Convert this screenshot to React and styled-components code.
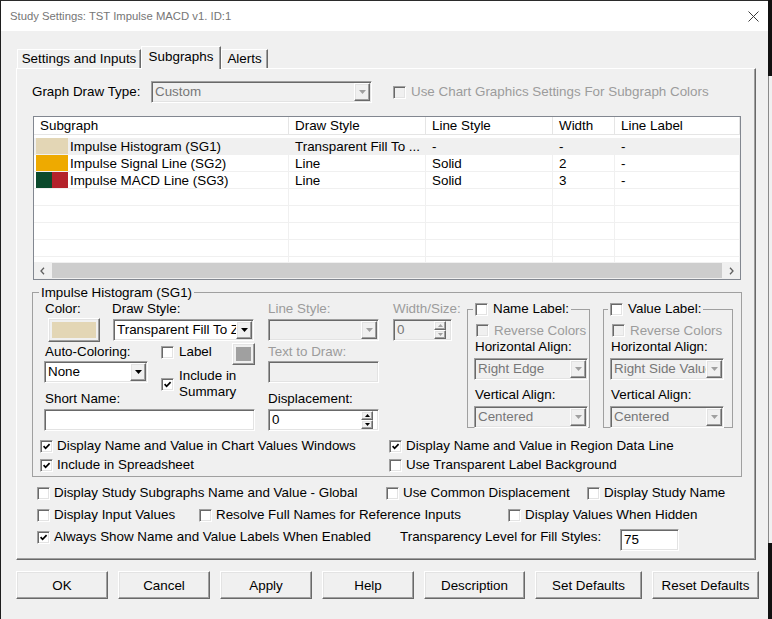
import React from 'react';
import styled, { createGlobalStyle, css } from 'styled-components';

const GlobalStyle = createGlobalStyle`
  * { box-sizing: border-box; }
  html, body { margin: 0; padding: 0; }
  body {
    width: 772px;
    height: 619px;
    overflow: hidden;
    background: #f0f0f0;
    color: #000;
    font-family: 'Liberation Sans', Arial, sans-serif;
    font-size: 13.4px;
  }
`;

const DISABLED_TEXT = '#9c9c9c';
const GRAY_VALUE = '#777';

const raised = css`
  border: 1px solid;
  border-color: #fff #696969 #696969 #fff;
  box-shadow: inset -1px -1px #a0a0a0, inset 1px 1px #e3e3e3;
  background: #f0f0f0;
`;

const sunken = css`
  border: 1px solid;
  border-color: #a0a0a0 #fff #fff #a0a0a0;
  box-shadow: inset 1px 1px #696969, inset -1px -1px #e3e3e3;
`;

const Screen = styled.div`
  display: flex;
  width: 772px;
  height: 619px;
`;

const Dialog = styled.div`
  width: 768px;
  height: 619px;
  flex: none;
  display: flex;
  flex-direction: column;
  border-top: 1px solid #2b2b2b;
  border-left: 1px solid #1e1e1e;
`;

const TitleBar = styled.div`
  height: 30px;
  flex: none;
  background: #fff;
  display: flex;
  align-items: center;
  justify-content: space-between;
  padding: 0 9px 0 9px;
`;

const Title = styled.span`
  font-size: 11.3px;
  color: #767676;
`;

const Body = styled.div`
  flex: 1;
  padding: 15px 0 0 15px;
`;

const TabStrip = styled.div`
  display: flex;
  align-items: flex-end;
  height: 22px;
  padding-left: 1px;
`;

const Tab = styled.div`
  position: relative;
  z-index: ${p => (p.$active ? 2 : 1)};
  width: ${p => p.$w}px;
  height: ${p => (p.$active ? 23 : 19)}px;
  margin-bottom: ${p => (p.$active ? -1 : 0)}px;
  padding-bottom: ${p => (p.$active ? 3 : 2)}px;
  display: flex;
  align-items: center;
  justify-content: center;
  background: #f0f0f0;
  border-top: 1px solid #fff;
  border-left: 1px solid #fff;
  border-right: 1px solid #696969;
  box-shadow: inset -1px 0 #a0a0a0;
`;

const Panel = styled.div`
  width: 740px;
  height: 492px;
  padding: 12px 0 0 15px;
  border: 1px solid;
  border-color: #fff #696969 #696969 #fff;
  box-shadow: inset -1px -1px #a0a0a0;
`;

const Row = styled.div`
  display: flex;
  align-items: center;
  height: ${p => p.$h || 22}px;
  margin: ${p => p.$m || 0};
`;

const Label = styled.span`
  flex: none;
  width: ${p => (p.$w ? `${p.$w}px` : 'auto')};
  margin: ${p => p.$m || 0};
  line-height: 16px;
  white-space: nowrap;
  color: ${p => (p.$disabled ? DISABLED_TEXT : '#000')};
`;

/* ---------- form controls ---------- */

const Field = styled.div`
  flex: none;
  width: ${p => p.$w}px;
  height: 22px;
  margin: ${p => p.$m || 0};
  padding: 1px;
  display: flex;
  align-items: stretch;
  ${sunken}
  background: ${p => (p.$disabled ? '#f0f0f0' : '#fff')};
`;

const FieldText = styled.span`
  flex: 1;
  min-width: 0;
  overflow: hidden;
  white-space: nowrap;
  padding-left: 2px;
  line-height: 18px;
  color: ${p => (p.$disabled ? GRAY_VALUE : '#000')};
`;

const DropBtn = styled.span`
  flex: none;
  width: 16px;
  display: flex;
  align-items: center;
  justify-content: center;
  ${raised}
`;

const SpinCol = styled.span`
  flex: none;
  width: 12px;
  margin-right: 4px;
  display: flex;
  flex-direction: column;
`;

const SpinBtn = styled.span`
  flex: 1;
  display: flex;
  align-items: center;
  justify-content: center;
  ${raised}
`;

const DownArrow = ({ disabled }) => (
  <svg width="7" height="4" viewBox="0 0 7 4">
    <path d="M0 0H7L3.5 4Z" fill={disabled ? '#a0a0a0' : '#000'} />
  </svg>
);

const SpinArrow = ({ up, disabled }) => (
  <svg width="5" height="3" viewBox="0 0 5 3">
    <path d={up ? 'M0 3H5L2.5 0Z' : 'M0 0H5L2.5 3Z'} fill={disabled ? '#a0a0a0' : '#000'} />
  </svg>
);

function Combo({ w, value, disabled, m }) {
  return (
    <Field $w={w} $m={m} $disabled={disabled}>
      <FieldText $disabled={disabled}>{value}</FieldText>
      <DropBtn>
        <DownArrow disabled={disabled} />
      </DropBtn>
    </Field>
  );
}

function Spinner({ w, value, disabled, m }) {
  return (
    <Field $w={w} $m={m} $disabled={disabled}>
      <FieldText $disabled={disabled}>{value}</FieldText>
      <SpinCol>
        <SpinBtn>
          <SpinArrow up disabled={disabled} />
        </SpinBtn>
        <SpinBtn>
          <SpinArrow disabled={disabled} />
        </SpinBtn>
      </SpinCol>
    </Field>
  );
}

function TextBox({ w, value, disabled, m }) {
  return (
    <Field $w={w} $m={m} $disabled={disabled}>
      <FieldText $disabled={disabled}>{value}</FieldText>
    </Field>
  );
}

const CheckWrap = styled.span`
  display: inline-flex;
  align-items: center;
  gap: ${p => p.$gap}px;
  margin: ${p => p.$m || 0};
  flex: none;
  white-space: nowrap;
  line-height: 16px;
  color: ${p => (p.$disabled ? DISABLED_TEXT : '#000')};
`;

const Box = styled.span`
  width: 13px;
  height: 13px;
  flex: none;
  display: flex;
  align-items: center;
  justify-content: center;
  ${sunken}
  background: ${p => (p.$disabled ? '#f0f0f0' : '#fff')};
`;

const Tick = () => (
  <svg width="9" height="9" viewBox="0 0 9 9">
    <path d="M1.6 4.2L3.6 6.3L7.6 2.1" fill="none" stroke="#000" strokeWidth="1.7" />
  </svg>
);

function Check({ checked, disabled, children, m, gap = 5 }) {
  return (
    <CheckWrap $disabled={disabled} $m={m} $gap={gap}>
      <Box $disabled={disabled}>{checked && <Tick />}</Box>
      <span>{children}</span>
    </CheckWrap>
  );
}

const ColorButton = styled.span`
  display: flex;
  width: ${p => p.$w}px;
  height: ${p => p.$h}px;
  margin: ${p => p.$m || 0};
  padding: 3px;
  ${raised}
`;

const ColorFill = styled.span`
  flex: 1;
  background: ${p => p.$color};
`;

/* ---------- list view ---------- */

const COLS = '255px 137px 127px 62px 125px';

const ListView = styled.div`
  margin: 13px 0 0 1px;
  width: 708px;
  height: 164px;
  display: flex;
  flex-direction: column;
  background: #fff;
  border: 1px solid #828790;
`;

const HeaderRow = styled.div`
  display: grid;
  grid-template-columns: ${COLS};
  height: 18px;
  flex: none;
`;

const HeaderCell = styled.div`
  padding-left: 6px;
  line-height: 17px;
  border-right: 1px solid #e5e5e5;
  border-bottom: 1px solid #e5e5e5;
  white-space: nowrap;
`;

const RowsArea = styled.div`
  flex: 1;
  overflow: hidden;
  padding-top: 3px;
`;

const ListRow = styled.div`
  display: grid;
  grid-template-columns: ${COLS};
  height: 17px;
  background: ${p => (p.$selected ? '#f0f0f0' : '#fff')};
`;

const Cell = styled.div`
  display: flex;
  align-items: center;
  padding-left: ${p => (p.$first ? 2 : 6)}px;
  border-right: 1px solid #f0f0f0;
  border-bottom: 1px solid #f0f0f0;
  white-space: nowrap;
  overflow: hidden;
`;

const SwatchStrip = styled.span`
  display: flex;
  width: 32px;
  height: 16px;
  flex: none;
  margin-right: 2px;
`;

const SwatchPiece = styled.span`
  flex: 1;
  background: ${p => p.$color};
`;

const HScroll = styled.div`
  height: 17px;
  flex: none;
  display: flex;
  background: #f0f0f0;
`;

const ScrollArrow = styled.span`
  width: 17px;
  flex: none;
  display: flex;
  align-items: center;
  justify-content: center;
`;

const Thumb = styled.span`
  flex: 1;
  margin: 1px;
  background: #cdcdcd;
`;

const Chevron = ({ right }) => (
  <svg width="5" height="8" viewBox="0 0 5 8">
    <path
      d={right ? 'M1 0.8L4 4L1 7.2' : 'M4 0.8L1 4L4 7.2'}
      fill="none"
      stroke="#606060"
      strokeWidth="1.3"
    />
  </svg>
);

/* ---------- group boxes ---------- */

const Group = styled.fieldset`
  margin: ${p => p.$m || 0};
  padding: 0;
  width: ${p => p.$w}px;
  height: ${p => p.$h}px;
  min-width: 0;
  border: 1px solid #a0a0a0;
`;

const Legend = styled.legend`
  margin-left: ${p => p.$ml}px;
  padding: 0 2px;
  line-height: 15px;
  white-space: nowrap;
`;

const TopGrid = styled.div`
  display: grid;
  grid-template-columns: 9px 67px 49px 71px 23px 13px 111px 14px 59px 15px 123px 13px 130px;
  grid-template-rows: 18px 25px 18px 29px 17px 24px;
  margin-left: 3px;
`;

const Area = styled.div`
  grid-column: ${p => p.$col};
  grid-row: ${p => p.$row};
  align-self: ${p => p.$align || 'start'};
  margin: ${p => p.$m || 0};
  display: flex;
  align-items: center;
  min-width: 0;
`;

const SubBody = styled.div`
  display: flex;
  flex-direction: column;
  align-items: flex-start;
`;

const CheckLines = styled.div`
  display: flex;
  flex-direction: column;
  gap: ${p => p.$gap}px;
  margin: ${p => p.$m};
`;

const Slot = styled.div`
  flex: none;
  width: ${p => (p.$w ? `${p.$w}px` : 'auto')};
  display: flex;
  align-items: center;
`;

const ButtonRow = styled.div`
  display: flex;
  gap: 10px;
  margin-top: 11px;
`;

const Button = styled.button`
  width: ${p => p.$w}px;
  height: 28px;
  padding: 0;
  font: inherit;
  color: #000;
  ${raised}
`;

const RightEdge = styled.div`
  flex: 1;
  display: flex;
  flex-direction: column;
`;

const Backdrop = styled.div`
  height: ${p => p.$h}px;
  flex: ${p => (p.$h ? 'none' : 1)};
  background: ${p => p.$color};
  border-left: ${p => (p.$line ? '1px solid #8a8a8a' : 'none')};
`;

const CloseIcon = () => (
  <svg width="11" height="11" viewBox="0 0 11 11">
    <path d="M0.5 0.5L10.5 10.5M10.5 0.5L0.5 10.5" stroke="#3a3a3a" strokeWidth="1" />
  </svg>
);

const columns = ['Subgraph', 'Draw Style', 'Line Style', 'Width', 'Line Label'];

const subgraphs = [
  {
    colors: ['#e3d6b5'],
    name: 'Impulse Histogram (SG1)',
    draw: 'Transparent Fill To ...',
    line: '-',
    width: '-',
    label: '-',
    selected: true,
  },
  { colors: ['#eeaa00'], name: 'Impulse Signal Line (SG2)', draw: 'Line', line: 'Solid', width: '2', label: '-' },
  { colors: ['#0b4a2c', '#b3222b'], name: 'Impulse MACD Line (SG3)', draw: 'Line', line: 'Solid', width: '3', label: '-' },
];

const buttons = [
  ['OK', 92],
  ['Cancel', 92],
  ['Apply', 92],
  ['Help', 92],
  ['Description', 101],
  ['Set Defaults', 107],
  ['Reset Defaults', 107],
];

function LabelGroup({ title, w, legendMl, horiz }) {
  return (
    <Group $w={w} $h={127} $m="1px 0 0 0">
      <Legend $ml={legendMl}>
        <Check>{title}</Check>
      </Legend>
      <SubBody>
        <Check disabled m="4px 0 0 8px">Reverse Colors</Check>
        <Label $m="0 0 0 7px">Horizontal Align:</Label>
        <Combo w={114} value={horiz} disabled m="3px 0 0 6px" />
        <Label $m="7px 0 0 7px">Vertical Align:</Label>
        <Combo w={114} value="Centered" disabled m="3px 0 0 6px" />
      </SubBody>
    </Group>
  );
}

export default function App() {
  const emptyRows = Array.from({ length: 6 });
  return (
    <>
      <GlobalStyle />
      <Screen>
        <Dialog>
          <TitleBar>
            <Title>Study Settings: TST Impulse MACD v1. ID:1</Title>
            <CloseIcon />
          </TitleBar>
          <Body>
            <TabStrip>
              <Tab $w={124}>Settings and Inputs</Tab>
              <Tab $w={80} $active>
                Subgraphs
              </Tab>
              <Tab $w={47}>Alerts</Tab>
            </TabStrip>
            <Panel>
              <Row>
                <Label $w={119}>Graph Draw Type:</Label>
                <Combo w={221} value="Custom" disabled />
                <Check disabled m="0 0 0 21px">
                  Use Chart Graphics Settings For Subgraph Colors
                </Check>
              </Row>

              <ListView>
                <HeaderRow>
                  {columns.map(c => (
                    <HeaderCell key={c}>{c}</HeaderCell>
                  ))}
                </HeaderRow>
                <RowsArea>
                  {subgraphs.map(s => (
                    <ListRow key={s.name} $selected={s.selected}>
                      <Cell $first>
                        <SwatchStrip>
                          {s.colors.map(c => (
                            <SwatchPiece key={c} $color={c} />
                          ))}
                        </SwatchStrip>
                        {s.name}
                      </Cell>
                      <Cell>{s.draw}</Cell>
                      <Cell>{s.line}</Cell>
                      <Cell>{s.width}</Cell>
                      <Cell>{s.label}</Cell>
                    </ListRow>
                  ))}
                  {emptyRows.map((_, i) => (
                    <ListRow key={i}>
                      {columns.map(c => (
                        <Cell key={c} />
                      ))}
                    </ListRow>
                  ))}
                </RowsArea>
                <HScroll>
                  <ScrollArrow>
                    <Chevron />
                  </ScrollArrow>
                  <Thumb />
                  <ScrollArrow>
                    <Chevron right />
                  </ScrollArrow>
                </HScroll>
              </ListView>

              <Group $w={710} $h={192} $m="5px 0 0 0">
                <Legend $ml={6}>Impulse Histogram (SG1)</Legend>
                <TopGrid>
                  <Area $col="2 / 4" $row="1" $align="center">
                    <Label>Color:</Label>
                  </Area>
                  <Area $col="2 / 4" $row="2">
                    <ColorButton $w={52} $h={24} $m="0 0 0 3px">
                      <ColorFill $color="#e3d6b5" />
                    </ColorButton>
                  </Area>
                  <Area $col="3 / 6" $row="1" $align="center">
                    <Label>Draw Style:</Label>
                  </Area>
                  <Area $col="3 / 6" $row="2" $m="1px 0 0 1px">
                    <Combo w={141} value="Transparent Fill To Zero" />
                  </Area>

                  <Area $col="2 / 4" $row="3" $align="center">
                    <Label>Auto-Coloring:</Label>
                  </Area>
                  <Area $col="2 / 4" $row="4" $m="0 0 0 -1px">
                    <Combo w={104} value="None" />
                  </Area>
                  <Area $col="4" $row="3" $align="center">
                    <Check>Label</Check>
                  </Area>
                  <Area $col="5" $row="3 / 5">
                    <ColorButton $w={23} $h={22}>
                      <ColorFill $color="#a0a0a0" />
                    </ColorButton>
                  </Area>
                  <Area $col="4 / 7" $row="4 / 6" $align="center">
                    <Check checked>
                      Include in
                      <br />
                      Summary
                    </Check>
                  </Area>
                  <Area $col="2 / 4" $row="5" $align="center">
                    <Label>Short Name:</Label>
                  </Area>
                  <Area $col="2 / 6" $row="6" $m="2px 0 0 -1px">
                    <TextBox w={211} value="" />
                  </Area>

                  <Area $col="7" $row="1" $align="center">
                    <Label $disabled>Line Style:</Label>
                  </Area>
                  <Area $col="7" $row="2" $m="1px 0 0 0">
                    <Combo w={111} value="" disabled />
                  </Area>
                  <Area $col="7" $row="3" $align="center">
                    <Label $disabled>Text to Draw:</Label>
                  </Area>
                  <Area $col="7" $row="4">
                    <TextBox w={111} value="" disabled />
                  </Area>
                  <Area $col="7" $row="5" $align="center">
                    <Label>Displacement:</Label>
                  </Area>
                  <Area $col="7" $row="6" $m="2px 0 0 0">
                    <Spinner w={111} value="0" />
                  </Area>

                  <Area $col="9" $row="1" $align="center">
                    <Label $disabled>Width/Size:</Label>
                  </Area>
                  <Area $col="9" $row="2" $m="1px 0 0 0">
                    <Spinner w={59} value="0" disabled />
                  </Area>

                  <Area $col="11" $row="1 / 7">
                    <LabelGroup title="Name Label:" w={123} legendMl={5} horiz="Right Edge" />
                  </Area>
                  <Area $col="13" $row="1 / 7">
                    <LabelGroup title="Value Label:" w={130} legendMl={4} horiz="Right Side Value" />
                  </Area>
                </TopGrid>

                <CheckLines $gap={1} $m="6px 0 0 7px">
                  <Row $h={18}>
                    <Slot $w={349}>
                      <Check checked gap={4}>Display Name and Value in Chart Values Windows</Check>
                    </Slot>
                    <Check checked gap={4}>Display Name and Value in Region Data Line</Check>
                  </Row>
                  <Row $h={18}>
                    <Slot $w={349}>
                      <Check checked gap={4}>Include in Spreadsheet</Check>
                    </Slot>
                    <Check gap={4}>Use Transparent Label Background</Check>
                  </Row>
                </CheckLines>
              </Group>

              <CheckLines $gap={0} $m="5px 0 0 5px">
                <Row>
                  <Slot $w={349}>
                    <Check gap={4}>Display Study Subgraphs Name and Value - Global</Check>
                  </Slot>
                  <Slot $w={201}>
                    <Check gap={4}>Use Common Displacement</Check>
                  </Slot>
                  <Check gap={4}>Display Study Name</Check>
                </Row>
                <Row>
                  <Slot $w={162}>
                    <Check gap={4}>Display Input Values</Check>
                  </Slot>
                  <Slot $w={309}>
                    <Check gap={4}>Resolve Full Names for Reference Inputs</Check>
                  </Slot>
                  <Check gap={4}>Display Values When Hidden</Check>
                </Row>
                <Row>
                  <Slot $w={363}>
                    <Check checked gap={4}>Always Show Name and Value Labels When Enabled</Check>
                  </Slot>
                  <Label $w={220}>Transparency Level for Fill Styles:</Label>
                  <TextBox w={59} value="75" m="5px 0 0 0" />
                </Row>
              </CheckLines>
            </Panel>

            <ButtonRow>
              {buttons.map(([text, w]) => (
                <Button key={text} $w={w}>
                  {text}
                </Button>
              ))}
            </ButtonRow>
          </Body>
        </Dialog>
        <RightEdge>
          <Backdrop $h={76} $color="#111" />
          <Backdrop $color="#f0f0f0" $line />
          <Backdrop $h={76} $color="#111" />
        </RightEdge>
      </Screen>
    </>
  );
}
